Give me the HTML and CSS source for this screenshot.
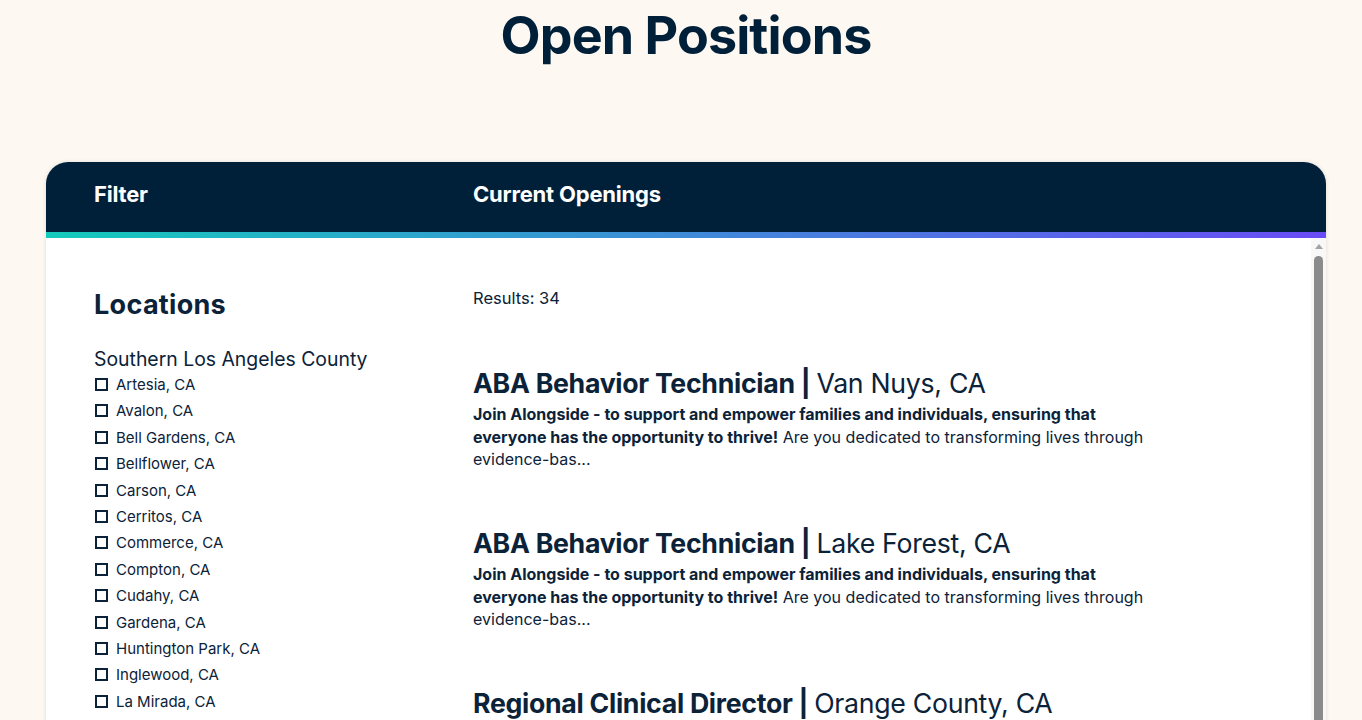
FILE: index.html
```html
<!DOCTYPE html>
<html>

<head>
    <meta charset="utf-8">
    <title>Open Positions</title>
    <meta name="viewport" content="width=device-width, initial-scale=1">
    <link rel="stylesheet" href="styles.css">
</head>

<body>
    <div class="wrap">
        <h1 class="page-title">Open Positions</h1>

        <div class="board">
            <div class="board-head">
                <h2>Filter</h2>
                <h2>Current Openings</h2>
            </div>
            <div class="board-bar"></div>

            <div class="board-body">
                <!-- left: filters -->
                <aside class="filters">
                    <h3>Locations</h3>
                    <p class="group">Southern Los Angeles County</p>
                    <ul class="checks">
                        <li><label><input type="checkbox"> Artesia, CA</label></li>
                        <li><label><input type="checkbox"> Avalon, CA</label></li>
                        <li><label><input type="checkbox"> Bell Gardens, CA</label></li>
                        <li><label><input type="checkbox"> Bellflower, CA</label></li>
                        <li><label><input type="checkbox"> Carson, CA</label></li>
                        <li><label><input type="checkbox"> Cerritos, CA</label></li>
                        <li><label><input type="checkbox"> Commerce, CA</label></li>
                        <li><label><input type="checkbox"> Compton, CA</label></li>
                        <li><label><input type="checkbox"> Cudahy, CA</label></li>
                        <li><label><input type="checkbox"> Gardena, CA</label></li>
                        <li><label><input type="checkbox"> Huntington Park, CA</label></li>
                        <li><label><input type="checkbox"> Inglewood, CA</label></li>
                        <li><label><input type="checkbox"> La Mirada, CA</label></li>
                        <li><label><input type="checkbox"> Lakewood, CA</label></li>
                        <li><label><input type="checkbox"> Long Beach, CA</label></li>
                    </ul>
                </aside>

                <!-- right: job list -->
                <section class="openings">
                    <p class="results">Results: 34</p>

                    <div class="job">
                        <h3>ABA Behavior Technician | <span class="loc">Van Nuys, CA</span></h3>
                        <p><strong>Join Alongside - to support and empower families and individuals, ensuring that everyone has the opportunity to thrive!</strong> Are you dedicated to transforming lives through evidence-bas...</p>
                    </div>

                    <div class="job">
                        <h3>ABA Behavior Technician | <span class="loc">Lake Forest, CA</span></h3>
                        <p><strong>Join Alongside - to support and empower families and individuals, ensuring that everyone has the opportunity to thrive!</strong> Are you dedicated to transforming lives through evidence-bas...</p>
                    </div>

                    <div class="job">
                        <h3>Regional Clinical Director | <span class="loc">Orange County, CA</span></h3>
                        <p><strong>Join Alongside - to support and empower families and individuals, ensuring that everyone has the opportunity to thrive!</strong> Are you dedicated to transforming lives through evidence-bas...</p>
                    </div>
                </section>

                <!-- scroll track drawn over the right edge -->
                <div class="scrollbar">
                    <span class="scroll-up"></span>
                    <span class="scroll-thumb"></span>
                </div>
            </div>
        </div>
    </div>
</body>

</html>
```

FILE: styles.css
```css
body {
    margin: 0;
    background-color: #fdf8f2;
    color: #0b2239;
    font-family: Inter, "Noto Sans", sans-serif;
}

.wrap {
    width: 1280px;
    margin-left: 46px;
}

.page-title {
    margin: 0;
    padding-top: 6px;
    height: 156px;
    text-align: center;
    font-size: 52px;
    font-weight: 700;
    line-height: 60px;
    letter-spacing: -0.9px;
    color: #00203a;
}

.board {
    background-color: #ffffff;
    border-radius: 22px 22px 0 0;
    overflow: hidden;
    box-shadow: 0 0 4px rgba(0, 0, 0, 0.12);
}

.board-head {
    display: grid;
    grid-template-columns: 379px 1fr;
    align-items: center;
    height: 70px;
    padding: 0 48px 6px;
    box-sizing: border-box;
    background-color: #00203a;
}

.board-head h2 {
    margin: 0;
    color: #ffffff;
    font-size: 22px;
    font-weight: 700;
    letter-spacing: -0.2px;
}

.board-bar {
    height: 6px;
    background: linear-gradient(90deg, #14cabb, #6a4cf6);
}

.board-body {
    position: relative;
    display: grid;
    grid-template-columns: 379px 1fr;
    height: 560px;
    padding: 46px 33px 0 48px;
    overflow: hidden;
}

.scrollbar {
    position: absolute;
    top: 0;
    right: 0;
    bottom: 0;
    width: 15px;
    background-color: #f8f8f8;
}

.scroll-up {
    display: block;
    width: 0;
    height: 0;
    margin: 6px auto 0 4px;
    border-left: 4px solid transparent;
    border-right: 4px solid transparent;
    border-bottom: 5px solid #a3a3a3;
}

.scroll-thumb {
    display: block;
    width: 9px;
    height: 520px;
    margin: 7px 0 0 3px;
    border-radius: 5px;
    background-color: #8b8b8b;
}

.filters h3 {
    margin: 4px 0 26px;
    font-size: 27px;
    font-weight: 700;
    letter-spacing: 0.3px;
}

.filters .group {
    margin: 0 0 4px;
    font-size: 19.4px;
}

.checks {
    list-style: none;
    margin: 0;
    padding: 0;
}

.checks li {
    height: 26.4px;
    font-size: 15px;
}

.checks label {
    display: flex;
    align-items: center;
    gap: 8px;
}

.checks input {
    appearance: none;
    width: 13px;
    height: 13px;
    margin: 0 0 0 1px;
    border: 2px solid #0b2239;
    border-radius: 0;
}

.results {
    margin: 4px 0 56px;
    font-size: 16.5px;
}

.job {
    height: 160px;
}

.job h3 {
    margin: 0 0 4px;
    padding-top: 3px;
    font-size: 26.7px;
    font-weight: 700;
    letter-spacing: -0.3px;
}

.job .loc {
    font-weight: 400;
}

.job p {
    margin: 0;
    max-width: 672px;
    font-size: 16px;
    line-height: 22.5px;
}
```
